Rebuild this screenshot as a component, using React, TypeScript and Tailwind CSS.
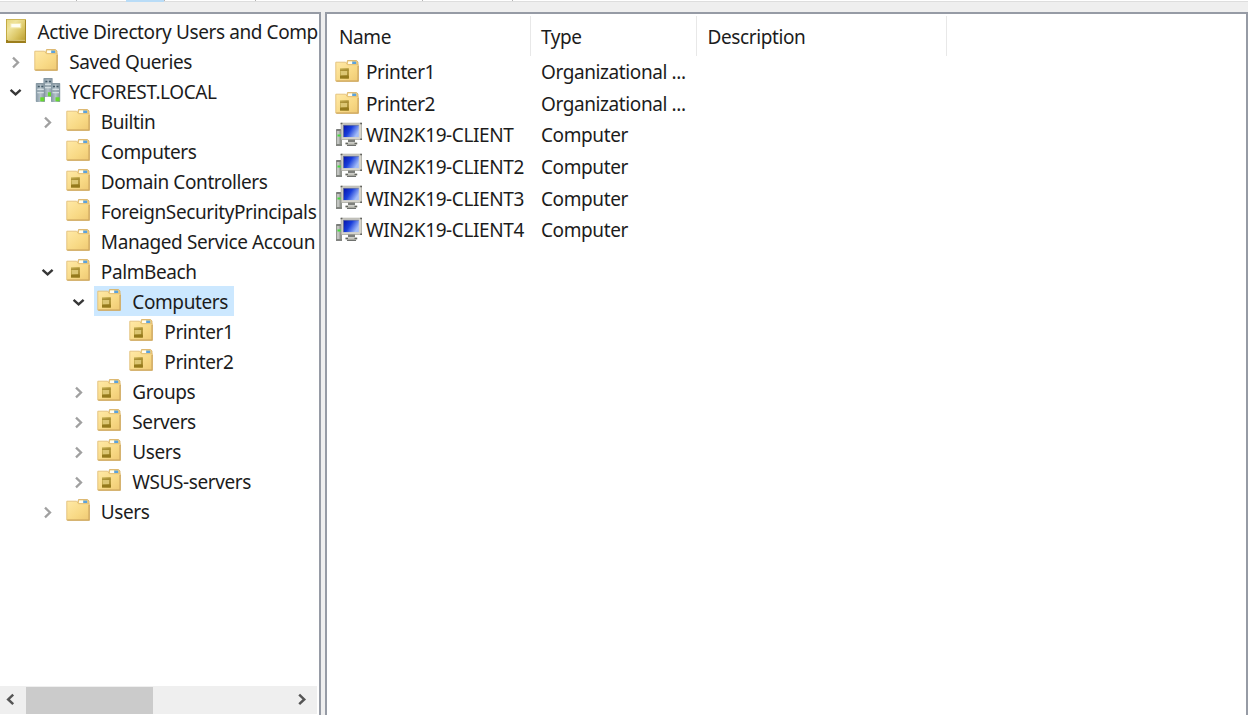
import type { ReactNode } from "react";

type IconKind = "folder" | "ou" | "domain";
type TreeNode = {
  label: string;
  icon: IconKind;
  indent: string;
  state?: "open" | "closed";
  selected?: boolean;
};

const L0 = "pl-[0px]";
const L1 = "pl-[31.5px]";
const L2 = "pl-[63px]";
const L3 = "pl-[95px]";

const nodes: TreeNode[] = [
  { label: "Saved Queries", icon: "folder", indent: L0, state: "closed" },
  { label: "YCFOREST.LOCAL", icon: "domain", indent: L0, state: "open" },
  { label: "Builtin", icon: "folder", indent: L1, state: "closed" },
  { label: "Computers", icon: "folder", indent: L1 },
  { label: "Domain Controllers", icon: "ou", indent: L1 },
  { label: "ForeignSecurityPrincipals", icon: "folder", indent: L1 },
  { label: "Managed Service Accoun", icon: "folder", indent: L1 },
  { label: "PalmBeach", icon: "ou", indent: L1, state: "open" },
  { label: "Computers", icon: "ou", indent: L2, state: "open", selected: true },
  { label: "Printer1", icon: "ou", indent: L3 },
  { label: "Printer2", icon: "ou", indent: L3 },
  { label: "Groups", icon: "ou", indent: L2, state: "closed" },
  { label: "Servers", icon: "ou", indent: L2, state: "closed" },
  { label: "Users", icon: "ou", indent: L2, state: "closed" },
  { label: "WSUS-servers", icon: "ou", indent: L2, state: "closed" },
  { label: "Users", icon: "folder", indent: L1, state: "closed" },
];

const items = [
  { name: "Printer1", type: "Organizational ...", icon: "ou" },
  { name: "Printer2", type: "Organizational ...", icon: "ou" },
  { name: "WIN2K19-CLIENT", type: "Computer", icon: "pc" },
  { name: "WIN2K19-CLIENT2", type: "Computer", icon: "pc" },
  { name: "WIN2K19-CLIENT3", type: "Computer", icon: "pc" },
  { name: "WIN2K19-CLIENT4", type: "Computer", icon: "pc" },
];

function Gradients() {
  return (
    <svg width="0" height="0" className="absolute">
      <defs>
        <linearGradient id="folder" x1="0" y1="0" x2="1" y2="1">
          <stop offset="0" stopColor="#ffe9a6" />
          <stop offset="0.6" stopColor="#f8d985" />
          <stop offset="1" stopColor="#efc973" />
        </linearGradient>
        <linearGradient id="book" x1="0" y1="0" x2="1" y2="1">
          <stop offset="0" stopColor="#e6d679" />
          <stop offset="0.3" stopColor="#efe39b" />
          <stop offset="0.6" stopColor="#dcc766" />
          <stop offset="1" stopColor="#b49524" />
        </linearGradient>
        <linearGradient id="badge" x1="0" y1="0" x2="1" y2="1">
          <stop offset="0" stopColor="#d2bc60" />
          <stop offset="1" stopColor="#8c6f12" />
        </linearGradient>
        <linearGradient id="screen" x1="0" y1="0" x2="1" y2="0.5">
          <stop offset="0" stopColor="#0512a8" />
          <stop offset="0.5" stopColor="#193edb" />
          <stop offset="1" stopColor="#a3bcf8" />
        </linearGradient>
        <linearGradient id="tower" x1="0" y1="0" x2="1" y2="0">
          <stop offset="0" stopColor="#8497a3" />
          <stop offset="0.5" stopColor="#b5c2ca" />
          <stop offset="1" stopColor="#7f919c" />
        </linearGradient>
      </defs>
    </svg>
  );
}

function Folder({ ou = false }: { ou?: boolean }) {
  return (
    <svg width="24" height="24" viewBox="0 0 24 24" className="shrink-0">
      <path d="M11.5 5 12.5 1.5h9l1.5 1.4V8H12z" fill="#f0cf80" stroke="#d5ad60" strokeWidth="0.8" />
      <path d="M13.2 2.6h4v2.4h-4z" fill="#fffdf0" />
      <path d="M17 2.6h4.2v2.4H17z" fill="#5aa2dd" />
      <path d="M.8 3.2h9.8l1.8 2.5h10.8v16.4H.8z" fill="url(#folder)" stroke="#e2bf78" strokeWidth="0.9" />
      <path d="M13.2 2.7h4v2.2h-4z" fill="#fffdf0" />
      <path d="M1.3 22.1h21.8V7" fill="none" stroke="#cda65c" strokeWidth="1.2" />
      {ou && (
        <g>
          <path d="M5 9.2h8.8v10.3H5z" fill="url(#badge)" />
          <path d="M5 11.2h8.8" stroke="#a58b33" strokeWidth="1.2" />
          <path d="M5.8 12h6.4v4.2H5.8z" fill="#dcc673" />
          <path d="M5 16.8h8.8v2.7H5z" fill="#957a1c" />
        </g>
      )}
    </svg>
  );
}

function Book() {
  return (
    <svg width="22" height="26" viewBox="0 0 22 26" className="shrink-0">
      <path d="M1 1h20v24H1z" fill="url(#book)" />
      <path d="M1 1.5h20" stroke="#cdb75a" />
      <path d="M1.5 1v22" stroke="#c3aa42" />
      <path d="M5.8 5.5h10v4.3h-10z" fill="#fffef0" stroke="#f3e9ab" />
      <path d="M1 22h20v3H1z" fill="#9c7e1c" />
      <path d="M3 22.4h17" stroke="#d8c578" strokeWidth="1.1" />
      <path d="M20.5 2v22" stroke="#a68a26" />
    </svg>
  );
}

function Tower({ x, y, h }: { x: number; y: number; h: number }) {
  return (
    <g transform={`translate(${x} ${y})`}>
      <rect width="9.2" height={h} rx="0.7" fill="url(#tower)" />
      <rect x="0.7" width="8" height="1.4" fill="#8797a1" />
      <path d="M2 3.5h2M5.5 3.5h2" stroke="#425866" strokeWidth="1.5" />
      <path d="M1.5 6.5h6.5M1.5 9.5h6.5" stroke="#d3dde2" strokeWidth="1.3" />
      <path d="M1.5 8h6.5" stroke="#8496a0" />
      <rect x="4.5" y={h - 4.7} width="4" height="4" fill="#66d92e" />
    </g>
  );
}

function Domain() {
  return (
    <svg width="27" height="26" viewBox="0 0 27 26" className="shrink-0">
      <Tower x={9.4} y={1} h={19} />
      <Tower x={1.8} y={6} h={19} />
      <Tower x={17} y={6} h={19} />
    </svg>
  );
}

function Computer() {
  return (
    <svg width="28" height="25" viewBox="0 0 28 25" className="shrink-0">
      <path d="M1 8h6v15.5H1z" fill="#92958f" />
      <path d="M2 9h2.5v13H2z" fill="#c2c4c1" />
      <path d="M1.2 7.8h5" stroke="#626562" strokeWidth="1.3" />
      <path d="M2.5 13.5H6" stroke="#45da3e" strokeWidth="2" />
      <path d="M1 23.2h6" stroke="#636562" />
      <path d="M6.2 1.2h20.3v16.3H6.2z" fill="#d6d4cb" stroke="#aaa9a2" strokeWidth="0.8" />
      <path d="M8.4 3.2h15.4v11.9H8.4z" fill="url(#screen)" />
      <path d="M8.4 15.1V3.2h15.4" fill="none" stroke="#6a7288" strokeWidth="0.7" />
      <path d="M5.6.8h1.8v1.5H5.6zM25.2.8H27v1.5h-1.8zM25.2 16.4H27v1.5h-1.8z" fill="#60615c" />
      <path d="M13 17.5h7v2.8h-7z" fill="#7d7f7b" />
      <path d="M10.5 20.5h11.7v2.6H10.5z" fill="#c2c2bb" />
      <path d="M10.5 21.3H13M19.5 21.3h2.7M12 23.3h9" stroke="#4d4f4b" />
    </svg>
  );
}

function Toggle({ state }: { state?: "open" | "closed" }) {
  return (
    <svg width="31" height="16" viewBox="0 0 31 16" fill="none" className="mt-[2px] shrink-0">
      {state === "open" && <path d="m10.6 5.8 5 4.6 5-4.6" stroke="#373737" strokeWidth="2.4" />}
      {state === "closed" && <path d="m13 3.7 5 4.8-5 4.8" stroke="#a0a0a0" strokeWidth="2.3" />}
    </svg>
  );
}

function TreeRow({ node }: { node: TreeNode }) {
  const icon: ReactNode = node.icon === "domain" ? <Domain /> : <Folder ou={node.icon === "ou"} />;
  return (
    <div className={`flex h-[30px] items-center ${node.indent}`}>
      <Toggle state={node.state} />
      <div className={`flex h-[30px] items-center pr-[6px] pl-[3px] ${node.selected ? "bg-[#cce8ff]" : ""}`}>
        <div className="mb-[3px] flex w-[35.3px] shrink-0">{icon}</div>
        <span className="pt-[2px]">{node.label}</span>
      </div>
    </div>
  );
}

export default function App() {
  return (
    <div className="flex h-[715px] w-[1248px] flex-col overflow-hidden bg-[#efefef] font-['Noto_Sans',sans-serif] text-[19px] leading-[28px] tracking-[-0.4px] whitespace-nowrap text-[#1c1c1c]">
      <Gradients />
      <div className="flex h-[2px] shrink-0 border-b border-[#dedede] bg-white">
        <div className="w-[77px] border-r border-[#b5b5b5]" />
        <div className="ml-[49px] h-[2px] w-[38px] bg-[#b9dcf7]" />
        <div className="w-[92px] border-x border-[#b5b5b5]" />
        <div className="w-[167px] border-r border-[#b5b5b5]" />
        <div className="w-[90px] border-r border-[#b5b5b5]" />
      </div>
      <div className="h-[10px] shrink-0" />
      <div className="flex min-h-0 flex-1">
        <aside className="flex w-[321px] shrink-0 flex-col border-t-2 border-r-2 border-[#969ba5] bg-white">
          <div className="flex-1 pt-[2px]">
            <div className="flex h-[30px] items-center pl-[5px]">
              <div className="w-[32.5px] shrink-0"><Book /></div>
              <span className="pt-[2px]">Active Directory Users and Comp</span>
            </div>
            {nodes.map((n, i) => <TreeRow key={i} node={n} />)}
          </div>
          <div className="mr-[2px] mb-[1px] flex h-[28px] shrink-0 items-center bg-[#efefef]">
            <svg width="26" height="28" viewBox="0 0 26 28" fill="none"><path d="m13.2 8.7-5 4.7 5 4.7" stroke="#555" strokeWidth="2.5" /></svg>
            <div className="h-[27px] w-[127px] bg-[#cbcbcb]" />
            <svg width="32" height="28" viewBox="0 0 32 28" fill="none" className="ml-auto"><path d="m14.2 8.7 5 4.7-5 4.7" stroke="#555" strokeWidth="2.5" /></svg>
          </div>
        </aside>
        <div className="w-[4px] shrink-0 bg-[#efefef]" />
        <main className="min-w-0 flex-1 border-x-2 border-t-2 border-[#969ba5] bg-white">
          <div className="mt-[2px] flex h-[40px] items-center">
            <div className="flex h-full w-[204px] items-center border-r border-[#e8e8e8] pt-[1px] pl-[12px]">Name</div>
            <div className="flex h-full w-[166px] items-center border-r border-[#e8e8e8] pt-[1px] pl-[10px]">Type</div>
            <div className="flex h-full w-[250px] items-center border-r border-[#e8e8e8] pt-[1px] pl-[10.5px]">Description</div>
          </div>
          {items.map((item) => (
            <div key={item.name} className="flex h-[31.7px] items-center">
              <div className="flex w-[214px] items-center pl-[8px]">
                <div className="mb-[2px] flex w-[31px] shrink-0">{item.icon === "ou" ? <Folder ou /> : <Computer />}</div>
                <span>{item.name}</span>
              </div>
              <span>{item.type}</span>
            </div>
          ))}
        </main>
      </div>
    </div>
  );
}
